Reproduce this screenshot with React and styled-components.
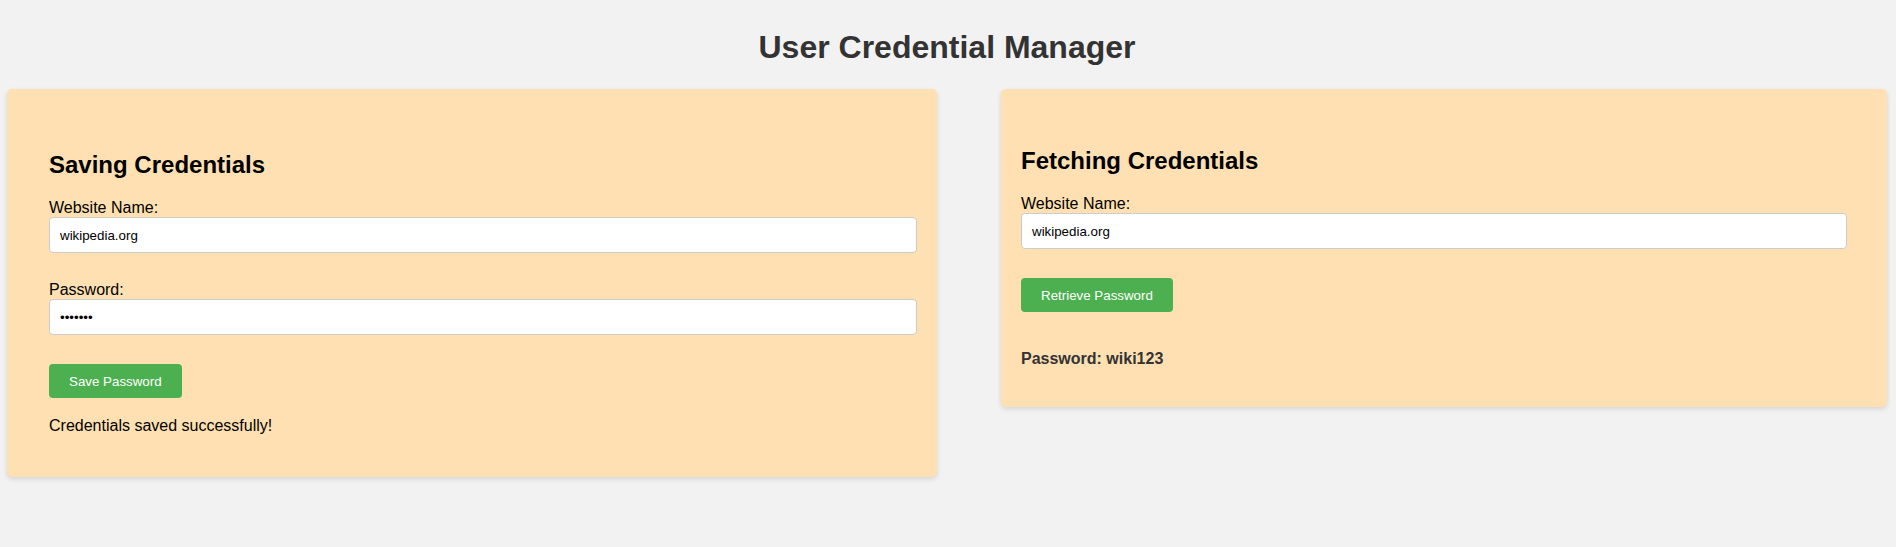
import styled, { createGlobalStyle } from "styled-components";
import { useState } from "react";

const GlobalStyle = createGlobalStyle`
  body {
    margin: 0;
    background: #f2f2f2;
    font-family: "Liberation Sans", Arial, sans-serif;
  }
`;

const Page = styled.div`
  padding: 29px 9px 40px 7px;
`;

const Title = styled.h1`
  margin: 0 0 23px;
  text-align: center;
  font-size: 32px;
  font-weight: bold;
  color: #333;
`;

const Columns = styled.div`
  display: grid;
  grid-template-columns: 930px 886px;
  column-gap: 64px;
  align-items: start;
`;

const Card = styled.section`
  background: #ffe0b2;
  border-radius: 5px;
  box-shadow: 0 2px 5px rgba(0, 0, 0, 0.12);
  padding: ${({ $pad }) => $pad};
`;

const Heading = styled.h2`
  margin: 0 0 20px;
  font-size: 24px;
  font-weight: bold;
  color: #000;
`;

const Field = styled.div`
  margin-bottom: ${({ $gap }) => $gap || "28px"};
`;

const Label = styled.label`
  display: block;
  font-size: 16px;
  color: #000;
`;

const Input = styled.input`
  display: block;
  box-sizing: border-box;
  width: 100%;
  height: 36px;
  padding: 0 10px;
  border: 1px solid #ccc;
  border-radius: 4px;
  background: #fff;
  font-family: "Liberation Sans", Arial, sans-serif;
  font-size: 13.33px;
  color: #000;
  outline: none;
`;

const Button = styled.button`
  display: block;
  height: 34px;
  padding: 0 20px;
  border: none;
  border-radius: 4px;
  background: #4caf50;
  color: #fff;
  font-family: "Liberation Sans", Arial, sans-serif;
  font-size: 13.33px;
  cursor: pointer;
  &:hover {
    background: #45a049;
  }
`;

const Message = styled.p`
  margin: ${({ $top }) => $top} 0 0;
  font-size: 16px;
  font-weight: ${({ $bold }) => ($bold ? "bold" : "normal")};
  color: ${({ $bold }) => ($bold ? "#333" : "#000")};
`;

export default function App() {
  const [store, setStore] = useState({ "wikipedia.org": "wiki123" });
  const [saveSite, setSaveSite] = useState("wikipedia.org");
  const [savePass, setSavePass] = useState("wiki123");
  const [saveMsg, setSaveMsg] = useState("Credentials saved successfully!");
  const [fetchSite, setFetchSite] = useState("wikipedia.org");
  const [result, setResult] = useState("Password: wiki123");

  const handleSave = () => {
    setStore((s) => ({ ...s, [saveSite]: savePass }));
    setSaveMsg("Credentials saved successfully!");
  };

  const handleFetch = () => {
    const found = store[fetchSite];
    setResult(found ? `Password: ${found}` : "No credentials found.");
  };

  return (
    <Page>
      <GlobalStyle />
      <Title>User Credential Manager</Title>
      <Columns>
        <Card $pad="62px 20px 42px 42px">
          <Heading>Saving Credentials</Heading>
          <Field>
            <Label>Website Name:</Label>
            <Input value={saveSite} onChange={(e) => setSaveSite(e.target.value)} />
          </Field>
          <Field $gap="29px">
            <Label>Password:</Label>
            <Input
              type="password"
              value={savePass}
              onChange={(e) => setSavePass(e.target.value)}
            />
          </Field>
          <Button onClick={handleSave}>Save Password</Button>
          {saveMsg && <Message $top="19px">{saveMsg}</Message>}
        </Card>
        <Card $pad="58px 40px 39px 20px">
          <Heading>Fetching Credentials</Heading>
          <Field $gap="29px">
            <Label>Website Name:</Label>
            <Input value={fetchSite} onChange={(e) => setFetchSite(e.target.value)} />
          </Field>
          <Button onClick={handleFetch}>Retrieve Password</Button>
          {result && (
            <Message $top="38px" $bold>
              {result}
            </Message>
          )}
        </Card>
      </Columns>
    </Page>
  );
}
